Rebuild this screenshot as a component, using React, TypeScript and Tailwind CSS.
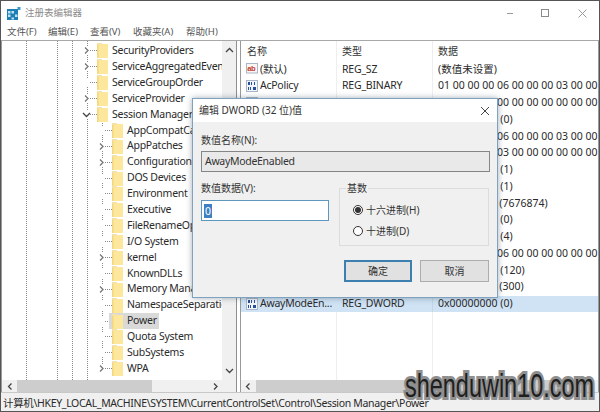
const FONT = "font-['Noto_Sans','Noto_Sans_CJK_SC',sans-serif]";

type TreeRow = { name: string; level: 1 | 2; arrow?: 'right' | 'down'; selected?: boolean };

const treeRows: TreeRow[] = [
  { name: 'SecurityProviders', level: 1, arrow: 'right' },
  { name: 'ServiceAggregatedEvents', level: 1, arrow: 'right' },
  { name: 'ServiceGroupOrder', level: 1 },
  { name: 'ServiceProvider', level: 1, arrow: 'right' },
  { name: 'Session Manager', level: 1, arrow: 'down' },
  { name: 'AppCompatCache', level: 2 },
  { name: 'AppPatches', level: 2, arrow: 'right' },
  { name: 'Configuration Manager', level: 2, arrow: 'right' },
  { name: 'DOS Devices', level: 2 },
  { name: 'Environment', level: 2 },
  { name: 'Executive', level: 2 },
  { name: 'FileRenameOperations', level: 2 },
  { name: 'I/O System', level: 2 },
  { name: 'kernel', level: 2, arrow: 'right' },
  { name: 'KnownDLLs', level: 2 },
  { name: 'Memory Management', level: 2, arrow: 'right' },
  { name: 'NamespaceSeparation', level: 2 },
  { name: 'Power', level: 2, selected: true },
  { name: 'Quota System', level: 2 },
  { name: 'SubSystems', level: 2 },
  { name: 'WPA', level: 2, arrow: 'right' },
];

type ValueRow = { name: string; type: string; data: string; text?: boolean; selected?: boolean };

const valueRows: ValueRow[] = [
  { name: '(默认)', type: 'REG_SZ', data: '(数值未设置)', text: true },
  { name: 'AcPolicy', type: 'REG_BINARY', data: '01 00 00 00 06 00 00 00 03 00 00 00 00 00' },
  { name: 'AcProcessor', type: 'REG_BINARY', data: '00 00 00 00 00 00 00 00 00 00 00 00 00 00 00 00 00 00' },
  { name: 'ActiveBoot', type: 'REG_DWORD', data: '0x00000000 (0)' },
  { name: 'BatteryPolicy', type: 'REG_BINARY', data: '01 00 00 00 06 00 00 00 03 00 00 00 00 00' },
  { name: 'Capabilities', type: 'REG_BINARY', data: '01 00 00 00 03 00 00 00 00 00 00 00 00 00' },
  { name: 'CoalescingA', type: 'REG_DWORD', data: '0x00000001 (1)' },
  { name: 'CoalescingB', type: 'REG_DWORD', data: '0x00000001 (1)' },
  { name: 'CsEnabled', type: 'REG_DWORD', data: '0x00752c8a (7676874)' },
  { name: 'DcPolicy', type: 'REG_DWORD', data: '0x00000000 (0)' },
  { name: 'Delay', type: 'REG_DWORD', data: '0x00000004 (4)' },
  { name: 'Flags', type: 'REG_BINARY', data: '01 00 00 00 06 00 00 00 00 00 00 00 00 00' },
  { name: 'Timeout', type: 'REG_DWORD', data: '0x00000078 (120)' },
  { name: 'Timeout2', type: 'REG_DWORD', data: '0x0000012c (300)' },
  { name: 'AwayModeEn...', type: 'REG_DWORD', data: '0x00000000 (0)', selected: true },
];

function Folder() {
  return (
    <svg width="11" height="15" viewBox="0 0 11 15" className="shrink-0">
      <rect x="0" y="1" width="11" height="14" fill="#f3d77f" />
      <rect x="1.5" y="1" width="9.5" height="14" fill="#fde79d" />
      <rect x="0" y="0" width="5" height="1.5" fill="#f1e2ae" />
    </svg>
  );
}

function Chevron({ dir, className }: { dir: 'left' | 'right' | 'up' | 'down'; className?: string }) {
  const points = {
    left: '5.5,1.5 2.5,4.5 5.5,7.5',
    right: '3,1.5 6,4.5 3,7.5',
    up: '1,6 4.5,2.5 8,6',
    down: '1,3 4.5,6.5 8,3',
  }[dir];
  return (
    <svg width="9" height="9" viewBox="0 0 9 9" className={`shrink-0 ${className ?? ''}`}>
      <polyline points={points} fill="none" stroke="currentColor" strokeWidth="1.3" />
    </svg>
  );
}

function BinIcon() {
  return (
    <svg width="12" height="12" viewBox="0 0 12 12" className="shrink-0">
      <rect x="0.5" y="0.5" width="11" height="11" fill="#f2f5fa" stroke="#a9b6c9" />
      <g fill="#2a4f9a">
        <rect x="2" y="2" width="2" height="3" />
        <rect x="5" y="2" width="1" height="3" />
        <rect x="8" y="2" width="1" height="3" />
        <rect x="2" y="7" width="1" height="3" />
        <rect x="4" y="7" width="1" height="3" />
        <rect x="7" y="7" width="3" height="3" />
      </g>
    </svg>
  );
}

function AbIcon() {
  return (
    <svg width="12" height="12" viewBox="0 0 12 12" className="shrink-0">
      <rect x="0.5" y="0.5" width="11" height="9.5" fill="#fbf6f4" stroke="#a9b6c9" />
      <text x="1.2" y="7.8" fontSize="7.5" fontWeight="700" fill="#c23a2b" fontFamily="Liberation Sans">
        ab
      </text>
    </svg>
  );
}

function AppIcon() {
  return (
    <svg width="14" height="13" viewBox="0 0 14 13" className="shrink-0">
      <rect x="0" y="2" width="11" height="11" fill="#1f7fb5" />
      <g fill="#bfe3f5">
        <rect x="1" y="4" width="2.5" height="2.5" />
        <rect x="4.5" y="4" width="2.5" height="2.5" />
        <rect x="1" y="7.5" width="2.5" height="2.5" />
        <rect x="8" y="7.5" width="2.5" height="2.5" />
        <rect x="4.5" y="10.5" width="2.5" height="2" />
      </g>
      <rect x="10.5" y="0" width="3" height="3" fill="#2f9bd0" />
    </svg>
  );
}

function TreePane() {
  return (
    <div className="w-[236px] shrink-0 flex flex-col border-l border-[#9a9a9a] border-r border-r-[#8f8f8f]">
      <div className="flex-1 flex min-h-0">
        <div className="relative w-[220px] overflow-hidden bg-white pt-[2px]">
          {/* tree guides */}
          <div className="absolute left-[24px] top-0 bottom-0 border-l border-dotted border-[#8a8a8a]" />
          <div className="absolute left-[55px] top-0 bottom-0 border-l border-dotted border-[#8a8a8a]" />
          <div className="absolute left-[70px] top-0 bottom-0 border-l border-dotted border-[#8a8a8a]" />
          <div className="absolute left-[85px] top-0 bottom-0 border-l border-dotted border-[#8a8a8a]" />
          <div className="absolute left-[100px] top-[82px] h-[247px] border-l border-dotted border-[#8a8a8a]" />
          {treeRows.map((row) => (
            <div
              key={row.name}
              className={`relative h-[15.9px] flex items-center whitespace-nowrap ${row.level === 1 ? 'pl-[81px]' : 'pl-[96px]'}`}
            >
              <div className="w-[7px] h-[9px] flex justify-center text-[#777] bg-white shrink-0 z-10">
                {row.arrow && <Chevron dir={row.arrow === 'down' ? 'down' : 'right'} className={row.arrow === 'down' ? 'text-[#444]' : ''} />}
              </div>
              <div className="w-[7px] shrink-0 border-t border-dotted border-[#8a8a8a]" />
              <div className={`flex items-center h-[16px] ${row.selected ? 'bg-[#d9d9d9] -ml-[3px] pl-[3px] pr-[2px]' : ''}`}>
                <Folder />
                <span className="ml-[4px] text-[10.5px] tracking-[-0.25px] text-[#2a2a2a]">{row.name}</span>
              </div>
            </div>
          ))}
        </div>
        <div className="flex-1 bg-[#f0f0f0] flex flex-col justify-between items-center py-[5px] text-[#444]">
          <Chevron dir="up" />
          <Chevron dir="down" />
        </div>
      </div>
      <div className="h-[12px] bg-[#f0f0f0] flex items-center text-[#444]">
        <Chevron dir="left" className="ml-[4px]" />
        <div className="ml-[2px] w-[135px] h-full bg-[#cdcdcd]" />
        <Chevron dir="right" className="ml-[59px]" />
      </div>
    </div>
  );
}

function ValuePane() {
  return (
    <div className="flex-1 min-w-0 ml-[3px] flex flex-col border-l border-[#9a9a9a] border-r border-r-[#9a9a9a]">
      <div className="flex-1 min-h-0 flex flex-col bg-white overflow-hidden">
        <div className="h-[20px] flex shrink-0 items-center text-[10px] text-[#333]">
          <div className="w-[96px] pl-[6px] h-full flex items-center border-r border-[#eeeeee]">名称</div>
          <div className="w-[96px] pl-[5px] h-full flex items-center border-r border-[#eeeeee]">类型</div>
          <div className="flex-1 pl-[5px]">数据</div>
        </div>
        {valueRows.map((row) => (
          <div
            key={row.name}
            className={`h-[16.75px] shrink-0 flex items-center text-[10.5px] text-[#2a2a2a] whitespace-nowrap ${row.selected ? 'bg-[#cfe3f4]' : ''}`}
          >
            <div className={`w-[96px] pl-[5px] h-full flex items-center gap-[2px] tracking-[-0.25px] border-r ${row.selected ? 'border-[#cfe3f4]' : 'border-[#eeeeee]'}`}>
              {row.text ? <AbIcon /> : <BinIcon />}
              <span>{row.name}</span>
            </div>
            <div className={`w-[96px] pl-[5px] h-full flex items-center tracking-[-0.2px] border-r ${row.selected ? 'border-[#c4d6e6]' : 'border-[#eeeeee]'}`}>{row.type}</div>
            <div className="flex-1 pl-[5px] overflow-hidden">{row.data}</div>
          </div>
        ))}
        <div className="flex-1 flex">
          <div className="w-[96px] border-r border-[#eeeeee]" />
          <div className="w-[96px] border-r border-[#eeeeee]" />
        </div>
      </div>
      <div className="h-[12px] bg-[#f0f0f0] flex items-center text-[#444]">
        <Chevron dir="left" className="ml-[3px]" />
        <div className="ml-[3px] flex-1 h-full bg-[#cdcdcd] mr-[14px]" />
      </div>
    </div>
  );
}

function DwordDialog() {
  return (
    <div className="absolute left-[191px] top-[97px] w-[306px] h-[200px] flex flex-col bg-[#f0f0f0] border border-[#7fa3bf] shadow-[0_0_6px_rgba(60,80,100,0.45)]">
      <div className="h-[23px] shrink-0 bg-white flex items-center justify-between pl-[6px] pr-[7px] text-[10px] text-[#333]">
        <span>编辑 DWORD (32 位)值</span>
        <svg width="10" height="10" viewBox="0 0 10 10">
          <path d="M1 1 L9 9 M9 1 L1 9" stroke="#444" strokeWidth="1" />
        </svg>
      </div>
      <div className="flex-1 flex flex-col pl-[8px] pt-[12px] text-[10px] text-[#333]">
        <div className="h-[13px] flex items-center">数值名称(N):</div>
        <div className="mt-[4px] h-[21px] w-[289px] bg-[#e9e9e9] border border-[#858585] flex items-center pl-[3px] text-[10.5px] tracking-[-0.3px]">
          AwayModeEnabled
        </div>
        <div className="mt-[10px] flex gap-[10px]">
          <div className="w-[128px]">
            <div className="h-[13px] flex items-center">数值数据(V):</div>
            <div className="mt-[5px] h-[21px] bg-white border border-[#5f96bd] flex items-center pl-[2px]">
              <span className="bg-[#3f7fc4] text-white text-[10.5px] leading-[14px] px-[1px]">0</span>
            </div>
          </div>
          <fieldset className="w-[150px] h-[64px] border border-[#dcdcdc] pl-[13px]">
            <legend className="ml-[-7px] px-[1px] text-[10px] leading-[12px]">基数</legend>
            <label className="flex items-center h-[16px] mt-[8px]">
              <span className="w-[10px] h-[10px] rounded-full border border-[#333] flex items-center justify-center bg-white">
                <span className="w-[6px] h-[6px] rounded-full bg-[#333]" />
              </span>
              <span className="ml-[3px]">十六进制(H)</span>
            </label>
            <label className="flex items-center h-[16px] mt-[5px]">
              <span className="w-[10px] h-[10px] rounded-full border border-[#333] bg-white" />
              <span className="ml-[3px]">十进制(D)</span>
            </label>
          </fieldset>
        </div>
        <div className="mt-[14px] w-[289px] flex justify-end gap-[8px] pr-[1px]">
          <button className="w-[68px] h-[22px] bg-[#e1e1e1] border-2 border-[#3d7fae] text-[10px] text-[#333]">确定</button>
          <button className="w-[69px] h-[22px] bg-[#e1e1e1] border border-[#adadad] text-[10px] text-[#333]">取消</button>
        </div>
      </div>
    </div>
  );
}

export default function App() {
  return (
    <div className={`relative w-[600px] h-[412px] overflow-hidden bg-white flex flex-col border border-[#555] ${FONT}`}>
      <div className="h-[24px] shrink-0 flex items-center pl-[6px] pr-[12px]">
        <AppIcon />
        <span className="ml-[4px] text-[9.5px] text-[#8c8c8c]">注册表编辑器</span>
        <div className="ml-auto flex items-center">
          <div className="w-[6px] border-t border-[#9a9a9a] mr-[28px]" />
          <div className="w-[8px] h-[8px] border border-[#8a8a8a] mr-[29px]" />
          <svg width="9" height="9" viewBox="0 0 9 9">
            <path d="M0.5 0.5 L8.5 8.5 M8.5 0.5 L0.5 8.5" stroke="#9a9a9a" strokeWidth="1" />
          </svg>
        </div>
      </div>
      <div className="h-[16px] shrink-0 flex items-center pl-[6px] text-[9.5px] text-[#555] border-b border-[#a8a8a8]">
        <span className="w-[41px]">文件(F)</span>
        <span className="w-[42px]">编辑(E)</span>
        <span className="w-[43px]">查看(V)</span>
        <span className="w-[53px]">收藏夹(A)</span>
        <span>帮助(H)</span>
      </div>
      <div className="flex-1 min-h-0 flex">
        <TreePane />
        <ValuePane />
      </div>
      <div className="h-[19px] shrink-0 bg-[#f0f0f0] border-t border-[#c8c8c8] flex items-center pl-[2px] pt-[3px] text-[10.5px] tracking-[-0.33px] text-[#2a2a2a] whitespace-nowrap">
        计算机\HKEY_LOCAL_MACHINE\SYSTEM\CurrentControlSet\Control\Session Manager\Power
      </div>
      <DwordDialog />
      <div className="absolute left-[404px] top-[365px] origin-left scale-x-[0.69] font-['Liberation_Sans',sans-serif] text-[34px] leading-[38px] text-[#1f1f1f] whitespace-nowrap [-webkit-text-stroke:6px_#8f8f8f] [paint-order:stroke_fill]">
        shenduwin10.com
      </div>
    </div>
  );
}
